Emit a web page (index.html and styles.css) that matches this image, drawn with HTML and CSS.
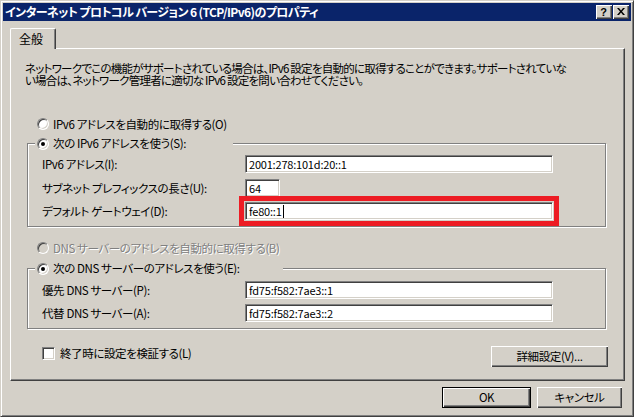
FILE: index.html
```html
<!DOCTYPE html>
<html lang="ja">
<head>
    <meta charset="UTF-8">
    <title>インターネット プロトコル バージョン 6 (TCP/IPv6)のプロパティ</title>
    <link rel="stylesheet" href="styles.css">
</head>
<body>
    <div class="window">
        <div class="titlebar">
            <span class="title">インターネット プロトコル バージョン 6 (TCP/IPv6)のプロパティ</span>
            <div class="caption-buttons">
                <div class="cap-btn help">?</div>
                <div class="cap-btn close">
                    <svg width="8" height="7" viewBox="0 0 8 7"><path d="M0 0h2l2 2.5 2-2.5h2l-3 3.5 3 3.5h-2l-2-2.5-2 2.5h-2l3-3.5z" fill="#000"/></svg>
                </div>
            </div>
        </div>

        <div class="dialog-body">
            <div class="tabs">
                <div class="tab">全般</div>
            </div>

            <div class="panel">
                <p class="desc">ネットワークでこの機能がサポートされている場合は、IPv6 設定を自動的に取得することができます。サポートされていな<br>い場合は、ネットワーク管理者に適切な IPv6 設定を問い合わせてください。</p>

                <div class="option auto-ip"><span class="radio"></span>IPv6 アドレスを自動的に取得する(O)</div>

                <div class="group ip-group">
                    <div class="legend" style="width: 198px"><span class="radio checked"></span>次の IPv6 アドレスを使う(S):</div>
                    <div class="field">
                        <span class="label">IPv6 アドレス(I):</span>
                        <div class="textbox">2001:278:101d:20::1</div>
                    </div>
                    <div class="field">
                        <span class="label">サブネット プレフィックスの長さ(U):</span>
                        <div class="textbox short">64</div>
                    </div>
                    <div class="field">
                        <span class="label">デフォルト ゲートウェイ(D):</span>
                        <div class="textbox marked">fe80::1<span class="caret"></span></div>
                    </div>
                </div>

                <div class="option auto-dns disabled"><span class="radio"></span>DNS サーバーのアドレスを自動的に取得する(B)</div>

                <div class="group dns-group">
                    <div class="legend" style="width: 248px"><span class="radio checked"></span>次の DNS サーバーのアドレスを使う(E):</div>
                    <div class="field">
                        <span class="label">優先 DNS サーバー(P):</span>
                        <div class="textbox">fd75:f582:7ae3::1</div>
                    </div>
                    <div class="field">
                        <span class="label">代替 DNS サーバー(A):</span>
                        <div class="textbox">fd75:f582:7ae3::2</div>
                    </div>
                </div>

                <div class="panel-footer">
                    <div class="check-row"><span class="checkbox"></span>終了時に設定を検証する(L)</div>
                    <div class="btn advanced">詳細設定(V)...</div>
                </div>
            </div>

            <div class="dialog-buttons">
                <div class="btn default ok">OK</div>
                <div class="btn cancel">キャンセル</div>
            </div>
        </div>
    </div>
</body>
</html>
```

FILE: styles.css
```css
* {
    box-sizing: border-box;
}

body {
    margin: 0;
    background: #d4d0c8;
    font-family: "Noto Sans CJK JP", sans-serif;
    font-size: 11.5px;
    letter-spacing: -0.4px;
    font-feature-settings: "palt";
    color: #000;
}

.window {
    width: 634px;
    height: 417px;
    background: #d4d0c8;
    border: 1px solid;
    border-color: #d4d0c8 #404040 #404040 #d4d0c8;
    box-shadow: inset 1px 1px #fff, inset -1px -1px #808080;
    padding: 2px;
    display: flex;
    flex-direction: column;
}

/* title bar */
.titlebar {
    height: 18px;
    background: #0a246a;
    display: flex;
    align-items: center;
    justify-content: space-between;
    padding: 0 2px 0 2px;
}

.title {
    color: #fff;
    font-size: 12px;
    font-weight: bold;
    letter-spacing: -0.6px;
    line-height: 18px;
    white-space: nowrap;
}

.caption-buttons {
    display: flex;
    gap: 1px;
}

.cap-btn {
    width: 16px;
    height: 14px;
    background: #d4d0c8;
    box-shadow: inset 1px 1px #fff, inset -1px -1px #404040, inset -2px -2px #808080;
    display: flex;
    align-items: center;
    justify-content: center;
}

.cap-btn.help {
    font-family: "Liberation Sans", sans-serif;
    font-weight: bold;
    font-size: 11px;
    letter-spacing: 0;
    line-height: 14px;
    padding-right: 1px;
}

.cap-btn.close svg {
    display: block;
    margin: 0 1px 1px 0;
}

/* body */
.dialog-body {
    flex: 1;
    padding: 7px 6px 0 7px;
    display: flex;
    flex-direction: column;
}

.tabs {
    display: flex;
    height: 20px;
}

.tab {
    position: relative;
    z-index: 1;
    width: 46px;
    height: 21px;
    background: #d4d0c8;
    border-top: 1px solid #fff;
    border-left: 1px solid #fff;
    border-right: 1px solid #404040;
    border-radius: 2px 2px 0 0;
    box-shadow: inset -1px 0 #808080;
    padding-left: 8px;
    font-size: 12px;
    letter-spacing: 0;
    line-height: 19px;
}

.panel {
    height: 333px;
    border: 1px solid;
    border-color: #fff #404040 #404040 #fff;
    box-shadow: inset -1px -1px #808080;
    display: flex;
    flex-direction: column;
}

.desc {
    margin: 13px 0 0 14px;
    line-height: 12px;
    white-space: nowrap;
    letter-spacing: -0.75px;
}

/* radio options */
.option {
    display: flex;
    align-items: center;
    height: 12px;
    line-height: 12px;
    margin-left: 26px;
    white-space: nowrap;
}

.auto-ip {
    margin-top: 32px;
}

.auto-dns {
    margin-top: 15px;
}

.option.disabled {
    color: #808080;
    text-shadow: 1px 1px #fff;
}

.radio {
    width: 12px;
    height: 12px;
    flex: none;
    margin-right: 4px;
    border-radius: 50%;
    border: 1px solid;
    border-color: #808080 #fff #fff #808080;
    box-shadow: inset 1px 1px #404040, inset -1px -1px #d4d0c8;
    background: #fff;
    display: flex;
    align-items: center;
    justify-content: center;
}

.disabled .radio {
    background: #d4d0c8;
}

.radio.checked::after {
    content: "";
    width: 4px;
    height: 4px;
    border-radius: 50%;
    background: #000;
}

/* group boxes */
.group {
    position: relative;
    width: 579px;
    margin-left: 16px;
    border: 1px solid #808080;
    box-shadow: 1px 1px #fff, inset 1px 1px #fff;
    padding: 11px 0 6px 14px;
}

.ip-group {
    margin-top: 13px;
}

.dns-group {
    margin-top: 14px;
    padding-top: 12px;
}

.legend {
    position: absolute;
    top: -7px;
    left: 7px;
    height: 13px;
    padding-left: 2px;
    background: #d4d0c8;
    display: flex;
    align-items: center;
    line-height: 13px;
    white-space: nowrap;
}

.field {
    display: flex;
    align-items: center;
    height: 18px;
}

.field + .field {
    margin-top: 5px;
}

.ip-group .field:nth-of-type(3) {
    margin-top: 6px;
}

.label {
    width: 203px;
    flex: none;
    white-space: nowrap;
}

.textbox {
    width: 308px;
    height: 18px;
    background: #fff;
    border: 1px solid;
    border-color: #808080 #fff #fff #808080;
    box-shadow: inset 1px 1px #404040, inset -1px -1px #d4d0c8;
    padding: 0 0 0 3px;
    font-size: 11px;
    letter-spacing: -0.2px;
    line-height: 16px;
    display: flex;
    align-items: center;
    white-space: nowrap;
}

.textbox.short {
    width: 35px;
}

.textbox.marked {
    outline: 5px solid #ed1c24;
    outline-offset: 1px;
}

.caret {
    width: 1px;
    height: 13px;
    margin-left: 1px;
    background: #000;
}

/* footer inside panel */
.panel-footer {
    display: flex;
    justify-content: space-between;
    align-items: flex-start;
    margin: 17px 16px 0 31px;
}

.check-row {
    display: flex;
    align-items: center;
    margin-top: 1px;
    line-height: 13px;
}

.checkbox {
    width: 13px;
    height: 13px;
    margin-right: 5px;
    background: #fff;
    border: 1px solid;
    border-color: #808080 #fff #fff #808080;
    box-shadow: inset 1px 1px #404040, inset -1px -1px #d4d0c8;
}

.btn {
    height: 21px;
    background: #d4d0c8;
    box-shadow: inset 1px 1px #fff, inset -1px -1px #404040, inset -2px -2px #808080;
    display: flex;
    align-items: center;
    justify-content: center;
    line-height: 19px;
    white-space: nowrap;
}

.btn.advanced {
    width: 117px;
}

.dialog-buttons {
    display: flex;
    justify-content: flex-end;
    gap: 6px;
    margin: 6px 3px 0 0;
}

.btn.default {
    border: 1px solid #000;
}

.btn.ok {
    width: 89px;
}

.btn.cancel {
    width: 85px;
}
```
